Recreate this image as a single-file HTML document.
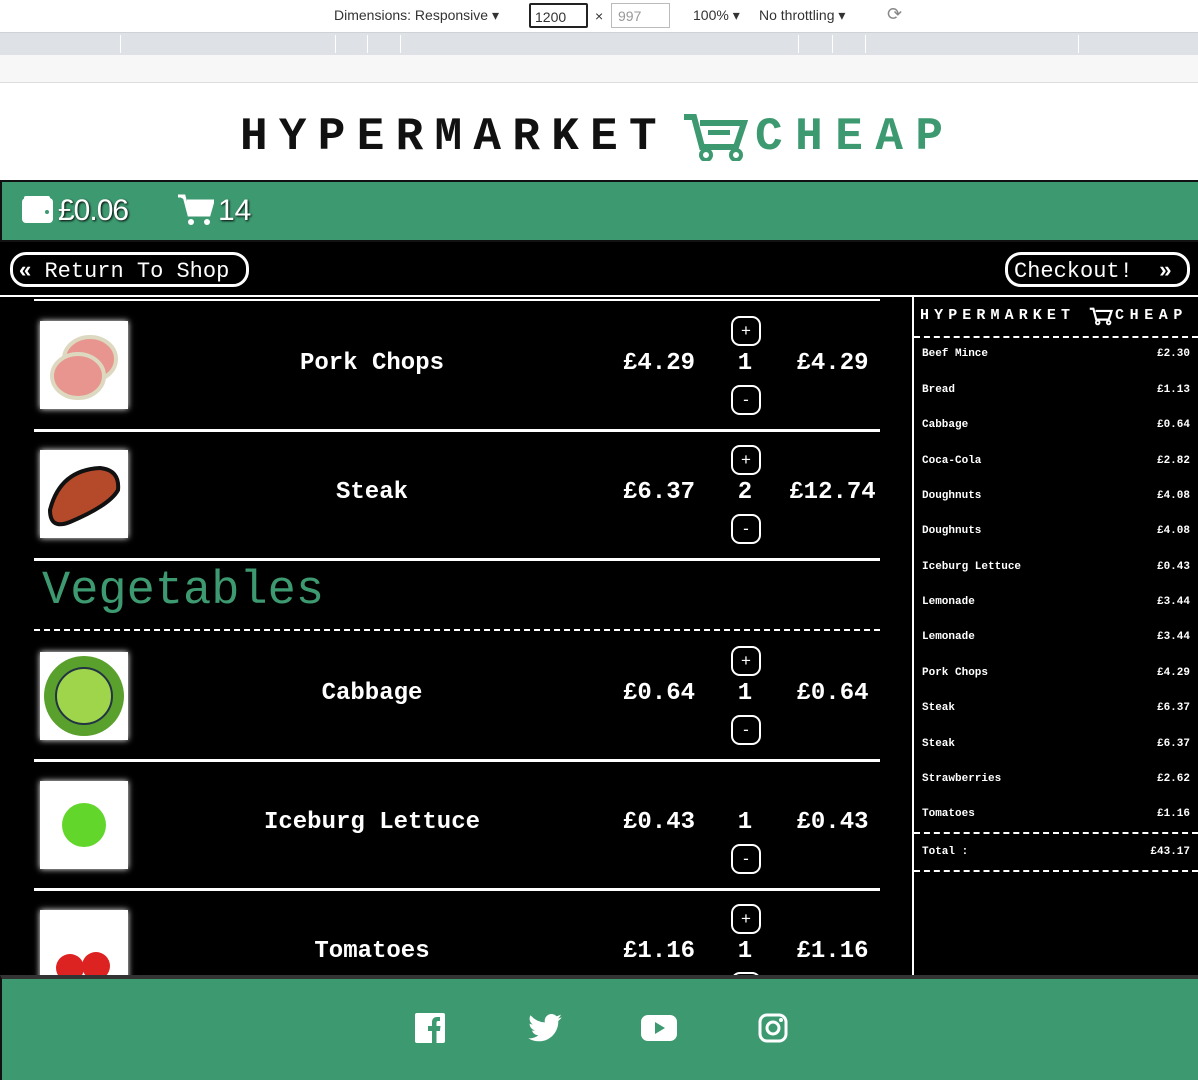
<!DOCTYPE html>
<html><head><meta charset="utf-8"><style>
*{margin:0;padding:0;box-sizing:border-box}
body{width:1198px;height:1080px;overflow:hidden;background:#000;font-family:"Liberation Mono",monospace;position:relative}
.a{position:absolute}
.tb{left:0;top:0;width:1198px;height:33px;background:#fff;border-bottom:1px solid #cfd1d4;font-family:"Liberation Sans",sans-serif;font-size:14px;color:#333}
.gb{left:0;top:33px;width:1198px;height:22px;background:#dee1e6}
.gb i{position:absolute;top:2px;width:1px;height:18px;background:#fff}
.lb{left:0;top:55px;width:1198px;height:28px;background:#f7f7f7;border-bottom:1px solid #ddd}
.hd{left:0;top:83px;width:1198px;height:97px;background:#fff}
.nav{left:0;top:180px;width:1198px;height:62px;background:#3d9970;border:2px solid #111;border-right:none}
.btn{border:3px solid #fff;border-radius:16px;color:#fff;font-size:22px;height:35px;line-height:29px;padding:0 6px;top:252px;white-space:pre}
.row{left:34px;width:846px;height:3px;background:#fff}
.img{left:40px;width:88px;height:88px;background:#fff;box-shadow:0 0 6px #fff}
.t{color:#fff;font-weight:bold;font-size:24px;text-align:center}
.pm{left:731px;width:30px;height:30px;border:2px solid #fff;border-radius:9px;color:#fff;font-size:17px;text-align:center;line-height:25px;font-family:"Liberation Sans",sans-serif}
.sb{left:912px;top:296px;width:2px;height:680px;background:#fff}
.si{left:922px;width:268px;color:#fff;font-size:11px;font-weight:bold;display:flex;justify-content:space-between}
.dash{left:914px;width:284px;border-top:2px dashed #fff}
.ft{left:0;top:975px;width:1198px;height:105px;background:#3d9970;border-top:4px solid #333;border-left:2px solid #111}
.logo{font-family:"Liberation Mono",monospace;font-weight:bold;font-size:46px;line-height:48px;letter-spacing:11.3px}
</style></head><body>
<div class="a tb"><span class="a" style="left:334px;top:7px">Dimensions: Responsive ▾</span>
<div class="a" style="left:529px;top:3px;width:59px;height:25px;border:2px solid #222;border-radius:2px;padding:4px 4px">1200</div>
<span class="a" style="left:595px;top:8px">×</span>
<div class="a" style="left:611px;top:3px;width:59px;height:25px;border:1px solid #bbb;padding:4px 6px;color:#999">997</div>
<span class="a" style="left:693px;top:7px">100% ▾</span><span class="a" style="left:759px;top:7px">No throttling ▾</span><span class="a" style="left:887px;top:4px;color:#888;font-size:18px">⟳</span></div>
<div class="a gb"><i style="left:120px"></i><i style="left:335px"></i><i style="left:367px"></i><i style="left:400px"></i><i style="left:798px"></i><i style="left:832px"></i><i style="left:865px"></i><i style="left:1078px"></i></div>
<div class="a lb"></div>
<div class="a hd">
<div class="a logo" style="left:240px;top:30px;color:#111">HYPERMARKET</div>
<svg class="a" style="left:682px;top:30px" width="66" height="48" viewBox="0 0 66 48"><path d="M2 4h10l8 30h34l8-24H18" fill="none" stroke="#3d9970" stroke-width="6"/><rect x="26" y="17" width="22" height="5" fill="#3d9970"/><circle cx="24" cy="42" r="5" fill="none" stroke="#3d9970" stroke-width="4"/><circle cx="54" cy="42" r="5" fill="none" stroke="#3d9970" stroke-width="4"/></svg>
<div class="a logo" style="left:755px;top:30px;color:#3d9970;letter-spacing:12.5px">CHEAP</div>
</div>
<div class="a nav">
<svg class="a" style="left:20px;top:14px" width="32" height="28" viewBox="0 0 32 28"><rect x="0" y="2" width="31" height="25" rx="4" fill="#fff"/><rect x="2" y="0" width="26" height="6" rx="2" fill="#fff"/><circle cx="25" cy="16" r="2" fill="#3d9970"/></svg>
<div class="a" style="left:56px;top:12px;color:#fff;font-family:'Liberation Sans',sans-serif;font-size:30px;letter-spacing:-1px;text-shadow:1px 1px 2px #000">£0.06</div>
<svg class="a" style="left:176px;top:12px" width="36" height="32" viewBox="0 0 36 32"><path d="M0 2h6l5 19h20l4-14H9" fill="#fff" stroke="#fff" stroke-width="3"/><circle cx="13" cy="28" r="3" fill="#fff"/><circle cx="29" cy="28" r="3" fill="#fff"/></svg>
<div class="a" style="left:216px;top:12px;color:#fff;font-family:'Liberation Sans',sans-serif;font-size:30px;text-shadow:1px 1px 2px #000">14</div>
</div>
<div class="a btn" style="left:10px;width:239px"><b style="font-family:'Liberation Sans',sans-serif">«</b> Return To Shop</div>
<div class="a btn" style="left:1005px;width:185px">Checkout!  <b style="font-family:'Liberation Sans',sans-serif">»</b></div>
<div class="a" style="left:0;top:295px;width:1198px;height:2px;background:#fff"></div>

<div class="a row" style="top:299px;height:2px"></div>
<div class="a img" style="top:321px"><svg width="88" height="88"><ellipse cx="50" cy="38" rx="26" ry="22" fill="#e8958f" stroke="#ddd8c0" stroke-width="4"/><ellipse cx="38" cy="55" rx="26" ry="22" fill="#e8958f" stroke="#ddd8c0" stroke-width="4"/></svg></div>
<div class="a t" style="left:250px;width:244px;top:350px">Pork Chops</div>
<div class="a t" style="left:605px;width:108px;top:350px">£4.29</div>
<div class="a t" style="left:730px;width:30px;top:350px">1</div>
<div class="a t" style="left:780px;width:105px;top:350px">£4.29</div>
<div class="a pm" style="top:316px">+</div><div class="a pm" style="top:385px">-</div>
<div class="a row" style="top:429px"></div>

<div class="a img" style="top:450px"><svg width="88" height="88"><path d="M10 60 Q20 20 60 18 Q80 20 78 40 Q70 55 30 72 Q10 80 10 60Z" fill="#b44a2a" stroke="#111" stroke-width="4"/></svg></div>
<div class="a t" style="left:250px;width:244px;top:479px">Steak</div>
<div class="a t" style="left:605px;width:108px;top:479px">£6.37</div>
<div class="a t" style="left:730px;width:30px;top:479px">2</div>
<div class="a t" style="left:775px;width:115px;top:479px">£12.74</div>
<div class="a pm" style="top:445px">+</div><div class="a pm" style="top:514px">-</div>
<div class="a row" style="top:558px"></div>

<div class="a" style="left:42px;top:566px;color:#3d9970;font-size:47px;line-height:52px">Vegetables</div>
<div class="a" style="left:34px;top:629px;width:846px;border-top:2px dashed #fff"></div>

<div class="a img" style="top:652px"><svg width="88" height="88"><circle cx="44" cy="44" r="40" fill="#5aa02c"/><circle cx="44" cy="44" r="28" fill="#9fd54a" stroke="#234" stroke-width="2"/></svg></div>
<div class="a t" style="left:250px;width:244px;top:680px">Cabbage</div>
<div class="a t" style="left:605px;width:108px;top:680px">£0.64</div>
<div class="a t" style="left:730px;width:30px;top:680px">1</div>
<div class="a t" style="left:780px;width:105px;top:680px">£0.64</div>
<div class="a pm" style="top:646px">+</div><div class="a pm" style="top:715px">-</div>
<div class="a row" style="top:759px"></div>

<div class="a img" style="top:781px"><svg width="88" height="88"><circle cx="44" cy="44" r="22" fill="#62d62a"/></svg></div>
<div class="a t" style="left:222px;width:300px;top:809px">Iceburg Lettuce</div>
<div class="a t" style="left:605px;width:108px;top:809px">£0.43</div>
<div class="a t" style="left:730px;width:30px;top:809px">1</div>
<div class="a t" style="left:780px;width:105px;top:809px">£0.43</div>
<div class="a pm" style="top:844px">-</div>
<div class="a row" style="top:888px"></div>

<div class="a img" style="top:910px"><svg width="88" height="88"><circle cx="30" cy="58" r="14" fill="#d22"/><circle cx="56" cy="56" r="14" fill="#d22"/></svg></div>
<div class="a t" style="left:250px;width:244px;top:938px">Tomatoes</div>
<div class="a t" style="left:605px;width:108px;top:938px">£1.16</div>
<div class="a t" style="left:730px;width:30px;top:938px">1</div>
<div class="a t" style="left:780px;width:105px;top:938px">£1.16</div>
<div class="a pm" style="top:904px">+</div><div class="a pm" style="top:972px">-</div>

<div class="a sb"></div>
<div class="a" style="left:920px;top:307px;color:#fff;font-family:'Liberation Mono',monospace;font-weight:bold;font-size:15px;letter-spacing:5.1px">HYPERMARKET</div>
<svg class="a" style="left:1089px;top:306px" width="24" height="20" viewBox="0 0 66 48"><path d="M2 4h10l8 30h34l8-24H18" fill="none" stroke="#fff" stroke-width="6"/><circle cx="24" cy="42" r="5" fill="none" stroke="#fff" stroke-width="5"/><circle cx="54" cy="42" r="5" fill="none" stroke="#fff" stroke-width="5"/></svg>
<div class="a" style="left:1115px;top:307px;color:#fff;font-family:'Liberation Mono',monospace;font-weight:bold;font-size:15px;letter-spacing:5.6px">CHEAP</div>
<div class="a dash" style="top:336px"></div>
<div class="a si" style="top:348px"><span>Beef Mince</span><span>£2.30</span></div>
<div class="a si" style="top:384px"><span>Bread</span><span>£1.13</span></div>
<div class="a si" style="top:419px"><span>Cabbage</span><span>£0.64</span></div>
<div class="a si" style="top:455px"><span>Coca-Cola</span><span>£2.82</span></div>
<div class="a si" style="top:490px"><span>Doughnuts</span><span>£4.08</span></div>
<div class="a si" style="top:525px"><span>Doughnuts</span><span>£4.08</span></div>
<div class="a si" style="top:561px"><span>Iceburg Lettuce</span><span>£0.43</span></div>
<div class="a si" style="top:596px"><span>Lemonade</span><span>£3.44</span></div>
<div class="a si" style="top:631px"><span>Lemonade</span><span>£3.44</span></div>
<div class="a si" style="top:667px"><span>Pork Chops</span><span>£4.29</span></div>
<div class="a si" style="top:702px"><span>Steak</span><span>£6.37</span></div>
<div class="a si" style="top:738px"><span>Steak</span><span>£6.37</span></div>
<div class="a si" style="top:773px"><span>Strawberries</span><span>£2.62</span></div>
<div class="a si" style="top:808px"><span>Tomatoes</span><span>£1.16</span></div>
<div class="a dash" style="top:832px"></div>
<div class="a si" style="top:846px"><span>Total :</span><span>£43.17</span></div>
<div class="a dash" style="top:870px"></div>

<div class="a ft">
<svg class="a" style="left:413px;top:34px" width="30" height="30" viewBox="0 0 30 30"><rect width="30" height="30" rx="2" fill="#fff"/><path d="M17 30V18h-4v-5h4V9c0-3 2-5 5-5h3v4h-2c-1 0-1.5.7-1.5 1.5V13h4l-.6 5H21.5v12z" fill="#3d9970"/></svg>
<svg class="a" style="left:526px;top:35px" width="34" height="28" viewBox="0 0 24 20"><path d="M24 2.3c-.9.4-1.8.7-2.8.8 1-.6 1.800-1.6 2.2-2.7-1 .6-2 1-3.1 1.2A4.9 4.9 0 0 0 11.9 6 14 14 0 0 1 1.7.9a4.9 4.9 0 0 0 1.5 6.6c-.8 0-1.6-.3-2.2-.6 0 2.4 1.7 4.4 3.9 4.8-.7.2-1.5.2-2.2.1.6 2 2.4 3.4 4.6 3.4A9.9 9.9 0 0 1 0 17.3 14 14 0 0 0 7.5 19.5c9 0 14-7.5 14-14v-.6c1-.7 1.8-1.6 2.5-2.6z" fill="#fff"/></svg>
<svg class="a" style="left:639px;top:36px" width="36" height="26" viewBox="0 0 36 26"><rect width="36" height="26" rx="7" fill="#fff"/><path d="M14 7v12l10-6z" fill="#3d9970"/></svg>
<svg class="a" style="left:756px;top:34px" width="30" height="30" viewBox="0 0 30 30"><rect x="2" y="2" width="26" height="26" rx="7" fill="none" stroke="#fff" stroke-width="3"/><circle cx="15" cy="15" r="6" fill="none" stroke="#fff" stroke-width="3"/><circle cx="23" cy="7" r="2" fill="#fff"/></svg>
</div>
</body></html>
